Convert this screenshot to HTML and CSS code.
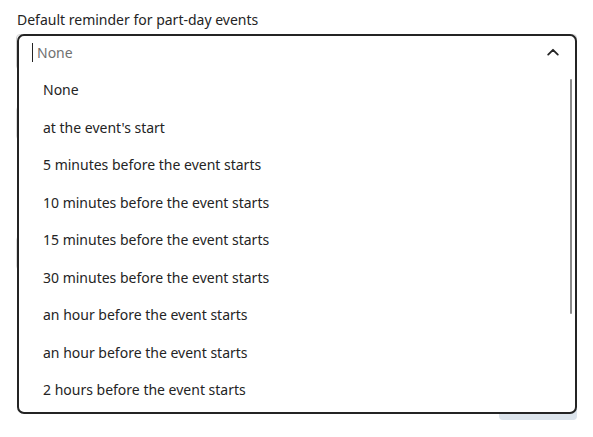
FILE: index.html
```html
<!DOCTYPE html>
<html lang="en">
<head>
<meta charset="utf-8">
<title>Default reminder</title>
<link rel="stylesheet" href="styles.css">
</head>
<body>
<div class="page">
  <label class="label" for="reminder">Default reminder for part-day events</label>
  <div class="combo">
    <div class="bg-input"></div>
    <div class="popup" role="combobox" aria-expanded="true">
      <div class="input-row">
        <span class="caret"></span>
        <span class="placeholder" id="reminder">None</span>
        <svg class="chevron" width="12" height="8" viewBox="0 0 12 8" aria-hidden="true">
          <path d="M1.2 6.6 L6 1.8 L10.8 6.6" fill="none" stroke="#242424" stroke-width="1.8" stroke-linecap="round" stroke-linejoin="round"/>
        </svg>
      </div>
      <ul class="list" role="listbox">
        <li class="option">None</li>
        <li class="option">at the event's start</li>
        <li class="option">5 minutes before the event starts</li>
        <li class="option">10 minutes before the event starts</li>
        <li class="option">15 minutes before the event starts</li>
        <li class="option">30 minutes before the event starts</li>
        <li class="option">an hour before the event starts</li>
        <li class="option">an hour before the event starts</li>
        <li class="option">2 hours before the event starts</li>
      </ul>
      <div class="scrollbar"></div>
    </div>
  </div>
  <div class="bg-field first"></div>
  <div class="bg-field second"></div>
  <div class="bg-actions"><div class="bg-button"></div></div>
</div>
</body>
</html>
```

FILE: styles.css
```css
html, body {
  margin: 0;
  padding: 0;
  background: #ffffff;
}

body {
  font-family: "Noto Sans", "Open Sans", sans-serif;
  font-size: 14px;
  color: #242424;
}

.page {
  padding: 10px 16px 0 16px;
  width: 561px;
}

.label {
  display: block;
  line-height: 20px;
  height: 20px;
  margin-left: 1px;
  margin-bottom: 4px;
}

.combo {
  position: relative;
}

.bg-input {
  height: 36px;
  border: 1px solid #d1d1d1;
  border-radius: 4px;
  box-sizing: border-box;
}

.popup {
  position: absolute;
  left: 1px;
  top: 0;
  width: 560px;
  height: 380px;
  box-sizing: border-box;
  border: 2px solid #242424;
  border-radius: 7px;
  background: #ffffff;
  z-index: 2;
}

.input-row {
  display: flex;
  align-items: center;
  height: 32px;
  padding-left: 13px;
  padding-right: 16px;
}

.caret {
  width: 1px;
  height: 19px;
  background: #242424;
}

.placeholder {
  margin-left: 4px;
  color: #707070;
}

.chevron {
  margin-left: auto;
}

.list {
  list-style: none;
  margin: 0;
  padding: 3px 0 0 0;
}

.option {
  height: 37.5px;
  display: flex;
  align-items: center;
  padding-left: 24px;
}

.scrollbar {
  position: absolute;
  top: 43px;
  right: 3px;
  width: 2px;
  height: 235px;
  background: #8a8a8a;
  border-radius: 1px;
}

.bg-field {
  height: 34px;
  border: 1px solid #dcdcdc;
  border-radius: 4px;
  box-sizing: border-box;
}

.bg-field.first {
  margin-top: 36px;
}

.bg-field.second {
  margin-top: 96px;
}

.bg-actions {
  display: flex;
  justify-content: flex-end;
  margin-top: 118px;
}

.bg-button {
  width: 78px;
  height: 32px;
  background: #dce4ec;
  border-radius: 4px;
}
```
